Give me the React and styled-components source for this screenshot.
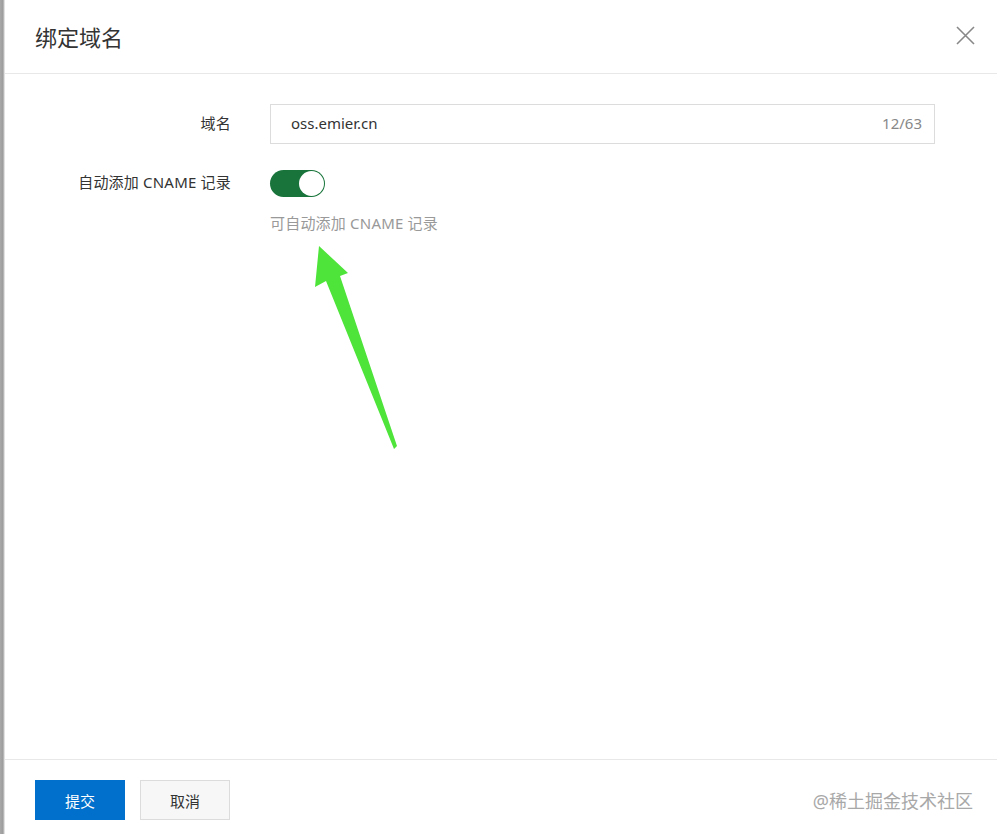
import React from "react";
import styled, { createGlobalStyle } from "styled-components";

const Global = createGlobalStyle`
  html, body { margin: 0; padding: 0; background: #fff; }
  body { font-family: "Noto Sans", "Noto Sans CJK SC", "Liberation Sans", sans-serif; }
  * { box-sizing: border-box; }
`;

const Page = styled.div`
  display: flex;
  width: 997px;
  height: 834px;
  overflow: hidden;
  position: relative;
`;

const Backdrop = styled.div`
  width: 5px;
  flex: none;
  background: linear-gradient(90deg, #a9a9a9 0, #9c9c9c 3px, #cfcfcf 4px, #f4f4f4 5px);
`;

const Dialog = styled.div`
  flex: 1;
  display: flex;
  flex-direction: column;
  background: #fff;
`;

const Header = styled.div`
  height: 74px;
  flex: none;
  display: flex;
  align-items: center;
  justify-content: space-between;
  padding: 0 22px 2px 30px;
  border-bottom: 1px solid #e8e8e8;
`;

const Title = styled.h1`
  margin: 0;
  font-size: 22px;
  font-weight: 400;
  color: #333;
`;

const Close = styled.button`
  border: 0;
  background: none;
  padding: 0;
  width: 20px;
  height: 20px;
  display: flex;
  align-items: center;
  justify-content: center;
  cursor: pointer;
`;

const Body = styled.div`
  flex: 1;
  position: relative;
  padding: 30px 62px 0 0;
  display: flex;
  flex-direction: column;
  gap: 26px;
`;

const Row = styled.div`
  display: grid;
  grid-template-columns: 226px 1fr;
  column-gap: 39px;
  align-items: start;
`;

const Label = styled.div`
  text-align: right;
  font-size: 15px;
  color: #333;
  letter-spacing: 0.2px;
  line-height: ${(p) => p.$lh || 38}px;
`;

const InputBox = styled.div`
  height: 40px;
  border: 1px solid #dcdcdc;
  display: flex;
  align-items: center;
  justify-content: space-between;
  padding: 0 12px 2px 20px;
  font-size: 15px;
  color: #333;
`;

const Counter = styled.span`
  font-size: 15px;
  color: #888;
`;

const Field = styled.div`
  display: flex;
  flex-direction: column;
  gap: 15px;
`;

const Switch = styled.div`
  width: 55px;
  height: 27px;
  border-radius: 14px;
  background: #18743a;
  display: flex;
  align-items: center;
  justify-content: flex-end;
  padding: 1px;
`;

const Knob = styled.div`
  width: 25px;
  height: 25px;
  border-radius: 50%;
  background: #fff;
`;

const Help = styled.div`
  font-size: 15px;
  letter-spacing: 0.2px;
  color: #999;
`;

const Arrow = styled.svg`
  position: absolute;
  left: 0;
  top: 0;
  pointer-events: none;
`;

const Footer = styled.div`
  height: 75px;
  flex: none;
  border-top: 1px solid #e8e8e8;
  display: flex;
  align-items: center;
  padding: 6px 24px 0 30px;
  gap: 15px;
`;

const Button = styled.button`
  width: 90px;
  height: 40px;
  font-family: inherit;
  font-size: 15px;
  border: 1px solid ${(p) => (p.$primary ? "#0070cc" : "#dcdcdc")};
  background: ${(p) => (p.$primary ? "#0070cc" : "#f7f7f7")};
  color: ${(p) => (p.$primary ? "#fff" : "#333")};
  cursor: pointer;
`;

const Watermark = styled.div`
  margin-left: auto;
  font-size: 18px;
  color: #a8a8a8;
`;

export default function App() {
  return (
    <>
      <Global />
      <Page>
        <Backdrop />
        <Dialog>
          <Header>
            <Title>绑定域名</Title>
            <Close aria-label="close">
              <svg width="19" height="19" viewBox="0 0 19 19">
                <path d="M1 1L18 18M18 1L1 18" stroke="#888" strokeWidth="1.6" fill="none" />
              </svg>
            </Close>
          </Header>
          <Body>
            <Row>
              <Label>域名</Label>
              <InputBox>
                <span>oss.emier.cn</span>
                <Counter>12/63</Counter>
              </InputBox>
            </Row>
            <Row>
              <Label $lh={25}>自动添加 CNAME 记录</Label>
              <Field>
                <Switch>
                  <Knob />
                </Switch>
                <Help>可自动添加 CNAME 记录</Help>
              </Field>
            </Row>
            <Arrow width="992" height="685" viewBox="5 74 992 685">
              <polygon
                points="319,246 348,273 340,276 397,446 394,449 326,281 315,287"
                fill="#4ee43a"
              />
            </Arrow>
          </Body>
          <Footer>
            <Button $primary>提交</Button>
            <Button>取消</Button>
            <Watermark>@稀土掘金技术社区</Watermark>
          </Footer>
        </Dialog>
      </Page>
    </>
  );
}
